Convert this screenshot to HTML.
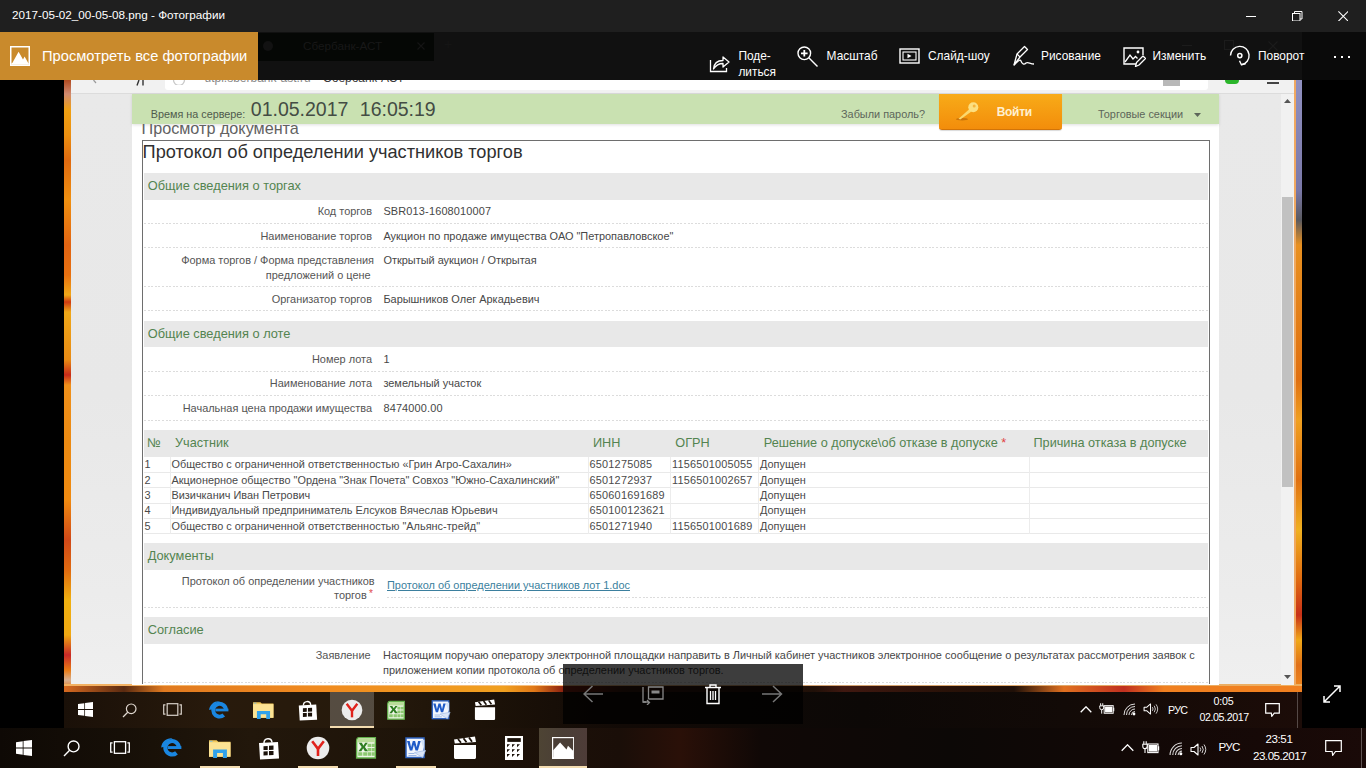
<!DOCTYPE html>
<html><head><meta charset="utf-8"><title>Фотографии</title>
<style>
*{margin:0;padding:0;box-sizing:border-box}
html,body{width:1366px;height:768px;overflow:hidden;background:#000}
body{position:relative;font-family:"Liberation Sans",sans-serif}
.a{position:absolute}
.t{position:absolute;white-space:nowrap}
</style></head><body>

<div class="a" style="left:71px;top:94px;width:1210px;height:591px;background:linear-gradient(180deg,#e9e9e9 0px,#e8e8e8 300px,#ececec 500px,#efefef 591px)"></div>
<div class="a" style="left:64px;top:80px;width:7px;height:612px;background:linear-gradient(180deg,#b04a20 0px,#d08a70 14px,#f0a012 30px,#ec9010 55px,#e06a10 80px,#f09010 120px,#e26412 165px,#e87010 195px,#f0a818 215px,#d03a12 222px,#f0a818 232px,#e88a14 280px,#c82a1a 295px,#f0901a 305px,#ec8a12 360px,#f08a10 420px,#d04818 460px,#e06a10 490px,#f0b010 520px,#f0a812 555px,#c82828 575px,#e87a14 590px,#d8b090 600px,#e09050 605px,#e08030 612px)"></div>
<div class="a" style="left:1294px;top:80px;width:2px;height:605px;background:#f0a860"></div>
<div class="a" style="left:1296px;top:80px;width:6px;height:612px;background:linear-gradient(180deg,#9090c0 0px,#7a78a8 110px,#5a5a60 140px,#e89020 165px,#e07010 300px,#f0a020 340px,#e07010 400px,#f0b020 450px,#e06a10 500px,#c83018 535px,#f0a818 560px,#e07018 585px,#f08a20 612px)"></div>
<div class="a" style="left:64px;top:684px;width:1238px;height:1.5px;background:linear-gradient(90deg,#f2b060,#f5c080 40%,#d0a070 60%,#f0b060)"></div>
<div class="a" style="left:64px;top:685.5px;width:1238px;height:6.5px;background:linear-gradient(90deg,#d86a20 0px,#5a2a10 60px,#e07a20 100px,#f08a20 250px,#f0a020 440px,#e07818 470px,#8a2010 500px,#3a1a10 560px,#201008 750px,#401810 780px,#2a1208 880px,#201008 950px,#e07020 1000px,#c03020 1060px,#f08020 1100px,#f08020 1238px)"></div>
<div class="a" style="left:71px;top:80px;width:1223px;height:14px;background:#f1f1f1;border-bottom:1px solid #dcdcdc"></div>
<div class="a" style="left:165px;top:80px;width:1043px;height:10px;background:#fff;border-radius:0 0 3px 3px"></div>
<div class="a" style="left:160px;top:80px;width:300px;height:12px;overflow:hidden"><div class="t" style="left:44.5px;top:-8.6px;font-size:12px;line-height:14px;color:#8a8a8a">utpi.sberbank-ast.ru</div><div class="t" style="left:163px;top:-8.6px;font-size:12px;line-height:14px;color:#3a3a3a">Сбербанк-АСТ</div></div>
<svg class="a" style="left:90px;top:80px;" width="60" height="6" viewBox="0 0 60 6"><path d="M3.5 0L6 3" stroke="#999" stroke-width="1.2"/><path d="M49 0L47 5.5M53 0V5.5" stroke="#333" stroke-width="1.4"/></svg>
<svg class="a" style="left:172px;top:80px;" width="14" height="5" viewBox="0 0 14 5"><path d="M1.5 0A5.5 5.5 0 0 0 12.5 0" fill="none" stroke="#c8c8c8" stroke-width="1.3"/></svg>
<div class="a" style="left:1163px;top:80px;width:17px;height:6px;background:#b8b8b8"></div>
<div class="a" style="left:1225px;top:80px;width:14px;height:4px;background:#2ab52a;border-radius:0 0 7px 7px"></div>
<div class="a" style="left:1267px;top:82px;width:12px;height:2px;background:#444"></div>
<div class="a" style="left:132px;top:124px;width:1087px;height:561px;background:#fff"></div>
<div class="a" style="left:132px;top:94px;width:1087px;height:30px;background:#c9e1b1;box-shadow:0 1px 3px rgba(0,0,0,.13)"></div>
<div class="a" style="left:1281px;top:94px;width:13px;height:591px;background:#f1f1f1"></div>
<div class="a" style="left:1282px;top:197px;width:11px;height:290px;background:#c1c1c1"></div>
<svg class="a" style="left:1284px;top:99px;" width="7" height="4" viewBox="0 0 7 4"><path d="M0 4H7L3.5 0Z" fill="#555"/></svg>
<svg class="a" style="left:1284px;top:675px;" width="7" height="4" viewBox="0 0 7 4"><path d="M0 0H7L3.5 4Z" fill="#555"/></svg>
<div class="t" style="left:150.80px;top:108.79px;font-size:10.8px;line-height:10.8px;color:#4f5a4c;font-weight:400;font-family:'Liberation Sans',sans-serif;">Время на сервере:</div>
<div class="t" style="left:250.80px;top:100.36px;font-size:19.5px;line-height:19.5px;color:#444c44;font-weight:400;font-family:'Liberation Sans',sans-serif;">01.05.2017</div>
<div class="t" style="left:359.80px;top:100.36px;font-size:19.5px;line-height:19.5px;color:#444c44;font-weight:400;font-family:'Liberation Sans',sans-serif;">16:05:19</div>
<div class="t" style="left:841.00px;top:108.58px;font-size:10.9px;line-height:10.9px;color:#5d665a;font-weight:400;font-family:'Liberation Sans',sans-serif;">Забыли пароль?</div>
<div class="t" style="left:1098.00px;top:108.58px;font-size:10.9px;line-height:10.9px;color:#5d665a;font-weight:400;font-family:'Liberation Sans',sans-serif;">Торговые секции</div>
<svg class="a" style="left:1194px;top:113px;" width="7" height="4" viewBox="0 0 7 4"><path d="M0 0H7L3.5 4Z" fill="#5d665a"/></svg>
<div class="a" style="left:939px;top:94px;width:123px;height:36px;background:linear-gradient(180deg,#f8ab18,#f38d0b);border-bottom:1px solid #d27408;border-radius:0 0 3px 3px;box-shadow:0 1px 1px rgba(0,0,0,.15)"></div>
<div class="t" style="left:996.70px;top:105.73px;font-size:12px;line-height:12px;color:#fff0d0;font-weight:700;font-family:'Liberation Sans',sans-serif;letter-spacing:-0.3px">Войти</div>
<svg class="a" style="left:954px;top:101px;" width="26" height="20" viewBox="0 0 26 20"><ellipse cx="8" cy="18.2" rx="6" ry="1.2" fill="#a85a08" opacity=".55"/><path d="M15.5 8 L4.5 17.8 L6.3 18.6 L17.8 10.3Z" fill="#fbd86e"/><circle cx="19.3" cy="6.2" r="5" fill="#fcdf80"/><circle cx="20.2" cy="5" r="1.5" fill="#f6b43a"/></svg>
<div class="a" style="left:132px;top:124px;width:400px;height:16px;overflow:hidden"><div class="t" style="left:9.5px;top:-6.21px;font-size:16.2px;line-height:20px;color:#626262">Просмотр документа</div></div>
<div class="a" style="left:142px;top:140px;width:1068px;height:544px;border:1.5px solid #6e6e6e;border-bottom:none"></div>
<div class="t" style="left:142.60px;top:143.12px;font-size:18.2px;line-height:18.2px;color:#303030;font-weight:400;font-family:'Liberation Sans',sans-serif;">Протокол об определении участников торгов</div>
<div class="a" style="left:143.5px;top:173px;width:1064.5px;height:27px;background:#e8e8e8"></div>
<div class="t" style="left:147.70px;top:180.33px;font-size:12.8px;line-height:12.8px;color:#538450;font-weight:400;font-family:'Liberation Sans',sans-serif;">Общие сведения о торгах</div>
<div class="t" style="right:994.00px;text-align:right;top:205.87px;font-size:10.95px;line-height:10.95px;color:#555;font-weight:400;font-family:'Liberation Sans',sans-serif;">Код торгов</div>
<div class="t" style="left:383.40px;top:205.87px;font-size:10.95px;line-height:10.95px;color:#474747;font-weight:400;font-family:'Liberation Sans',sans-serif;letter-spacing:0.16px">SBR013-1608010007</div>
<div class="a" style="left:143.5px;top:223px;width:1064.5px;height:1px;background:repeating-linear-gradient(90deg,#dcdcdc 0 2px,transparent 2px 3.6px)"></div>
<div class="t" style="right:994.00px;text-align:right;top:230.57px;font-size:10.95px;line-height:10.95px;color:#555;font-weight:400;font-family:'Liberation Sans',sans-serif;">Наименование торгов</div>
<div class="t" style="left:383.40px;top:230.57px;font-size:10.95px;line-height:10.95px;color:#474747;font-weight:400;font-family:'Liberation Sans',sans-serif;">Аукцион по продаже имущества ОАО "Петропавловское"</div>
<div class="a" style="left:143.5px;top:247px;width:1064.5px;height:1px;background:repeating-linear-gradient(90deg,#dcdcdc 0 2px,transparent 2px 3.6px)"></div>
<div class="t" style="right:992.00px;text-align:right;top:255.37px;font-size:10.95px;line-height:10.95px;color:#555;font-weight:400;font-family:'Liberation Sans',sans-serif;">Форма торгов / Форма представления</div>
<div class="t" style="right:995.30px;text-align:right;top:269.67px;font-size:10.95px;line-height:10.95px;color:#555;font-weight:400;font-family:'Liberation Sans',sans-serif;">предложений о цене</div>
<div class="t" style="left:383.40px;top:255.37px;font-size:10.95px;line-height:10.95px;color:#474747;font-weight:400;font-family:'Liberation Sans',sans-serif;">Открытый аукцион / Открытая</div>
<div class="a" style="left:143.5px;top:286px;width:1064.5px;height:1px;background:repeating-linear-gradient(90deg,#dcdcdc 0 2px,transparent 2px 3.6px)"></div>
<div class="t" style="right:994.00px;text-align:right;top:294.17px;font-size:10.95px;line-height:10.95px;color:#555;font-weight:400;font-family:'Liberation Sans',sans-serif;">Организатор торгов</div>
<div class="t" style="left:383.40px;top:294.17px;font-size:10.95px;line-height:10.95px;color:#474747;font-weight:400;font-family:'Liberation Sans',sans-serif;">Барышников Олег Аркадьевич</div>
<div class="a" style="left:143.5px;top:310px;width:1064.5px;height:1px;background:repeating-linear-gradient(90deg,#dcdcdc 0 2px,transparent 2px 3.6px)"></div>
<div class="a" style="left:143.5px;top:321px;width:1064.5px;height:26px;background:#e8e8e8"></div>
<div class="t" style="left:147.70px;top:328.33px;font-size:12.8px;line-height:12.8px;color:#538450;font-weight:400;font-family:'Liberation Sans',sans-serif;">Общие сведения о лоте</div>
<div class="t" style="right:994.00px;text-align:right;top:353.57px;font-size:10.95px;line-height:10.95px;color:#555;font-weight:400;font-family:'Liberation Sans',sans-serif;">Номер лота</div>
<div class="t" style="left:383.40px;top:353.57px;font-size:10.95px;line-height:10.95px;color:#474747;font-weight:400;font-family:'Liberation Sans',sans-serif;letter-spacing:0.16px">1</div>
<div class="a" style="left:143.5px;top:371px;width:1064.5px;height:1px;background:repeating-linear-gradient(90deg,#dcdcdc 0 2px,transparent 2px 3.6px)"></div>
<div class="t" style="right:994.00px;text-align:right;top:378.27px;font-size:10.95px;line-height:10.95px;color:#555;font-weight:400;font-family:'Liberation Sans',sans-serif;">Наименование лота</div>
<div class="t" style="left:383.40px;top:378.27px;font-size:10.95px;line-height:10.95px;color:#474747;font-weight:400;font-family:'Liberation Sans',sans-serif;">земельный участок</div>
<div class="a" style="left:143.5px;top:395px;width:1064.5px;height:1px;background:repeating-linear-gradient(90deg,#dcdcdc 0 2px,transparent 2px 3.6px)"></div>
<div class="t" style="right:994.00px;text-align:right;top:402.57px;font-size:10.95px;line-height:10.95px;color:#555;font-weight:400;font-family:'Liberation Sans',sans-serif;">Начальная цена продажи имущества</div>
<div class="t" style="left:383.40px;top:402.57px;font-size:10.95px;line-height:10.95px;color:#474747;font-weight:400;font-family:'Liberation Sans',sans-serif;letter-spacing:0.16px">8474000.00</div>
<div class="a" style="left:143.5px;top:420px;width:1064.5px;height:1px;background:repeating-linear-gradient(90deg,#dcdcdc 0 2px,transparent 2px 3.6px)"></div>
<div class="a" style="left:143.5px;top:430px;width:1064.5px;height:26.600000000000023px;background:#e8e8e8"></div>
<div class="t" style="left:147.00px;top:436.94px;font-size:12.7px;line-height:12.7px;color:#538450;font-weight:400;font-family:'Liberation Sans',sans-serif;">№</div>
<div class="t" style="left:175.00px;top:436.94px;font-size:12.7px;line-height:12.7px;color:#538450;font-weight:400;font-family:'Liberation Sans',sans-serif;">Участник</div>
<div class="t" style="left:593.00px;top:436.94px;font-size:12.7px;line-height:12.7px;color:#538450;font-weight:400;font-family:'Liberation Sans',sans-serif;">ИНН</div>
<div class="t" style="left:675.30px;top:436.94px;font-size:12.7px;line-height:12.7px;color:#538450;font-weight:400;font-family:'Liberation Sans',sans-serif;">ОГРН</div>
<div class="t" style="left:763.80px;top:436.94px;font-size:12.7px;line-height:12.7px;color:#538450;font-weight:400;font-family:'Liberation Sans',sans-serif;">Решение о допуске\об отказе в допуске <span style="color:#e04040">*</span></div>
<div class="t" style="left:1033.50px;top:436.94px;font-size:12.7px;line-height:12.7px;color:#538450;font-weight:400;font-family:'Liberation Sans',sans-serif;">Причина отказа в допуске</div>
<div class="t" style="left:144.50px;top:458.98px;font-size:10.9px;line-height:10.9px;color:#4a4a4a;font-weight:400;font-family:'Liberation Sans',sans-serif;">1</div>
<div class="t" style="left:171.50px;top:458.98px;font-size:10.9px;line-height:10.9px;color:#4a4a4a;font-weight:400;font-family:'Liberation Sans',sans-serif;">Общество с ограниченной ответственностью «Грин Агро-Сахалин»</div>
<div class="t" style="left:589.60px;top:458.98px;font-size:10.9px;line-height:10.9px;color:#4a4a4a;font-weight:400;font-family:'Liberation Sans',sans-serif;letter-spacing:0.2px">6501275085</div>
<div class="t" style="left:672.00px;top:458.98px;font-size:10.9px;line-height:10.9px;color:#4a4a4a;font-weight:400;font-family:'Liberation Sans',sans-serif;letter-spacing:0.2px">1156501005055</div>
<div class="t" style="left:760.00px;top:458.98px;font-size:10.9px;line-height:10.9px;color:#4a4a4a;font-weight:400;font-family:'Liberation Sans',sans-serif;">Допущен</div>
<div class="a" style="left:143.5px;top:471.7px;width:1064.5px;height:1.0px;background:#e9e9e9"></div>
<div class="t" style="left:144.50px;top:474.58px;font-size:10.9px;line-height:10.9px;color:#4a4a4a;font-weight:400;font-family:'Liberation Sans',sans-serif;">2</div>
<div class="t" style="left:171.50px;top:474.58px;font-size:10.9px;line-height:10.9px;color:#4a4a4a;font-weight:400;font-family:'Liberation Sans',sans-serif;">Акционерное общество "Ордена "Знак Почета" Совхоз "Южно-Сахалинский"</div>
<div class="t" style="left:589.60px;top:474.58px;font-size:10.9px;line-height:10.9px;color:#4a4a4a;font-weight:400;font-family:'Liberation Sans',sans-serif;letter-spacing:0.2px">6501272937</div>
<div class="t" style="left:672.00px;top:474.58px;font-size:10.9px;line-height:10.9px;color:#4a4a4a;font-weight:400;font-family:'Liberation Sans',sans-serif;letter-spacing:0.2px">1156501002657</div>
<div class="t" style="left:760.00px;top:474.58px;font-size:10.9px;line-height:10.9px;color:#4a4a4a;font-weight:400;font-family:'Liberation Sans',sans-serif;">Допущен</div>
<div class="a" style="left:143.5px;top:487.1px;width:1064.5px;height:1.0px;background:#e9e9e9"></div>
<div class="t" style="left:144.50px;top:489.98px;font-size:10.9px;line-height:10.9px;color:#4a4a4a;font-weight:400;font-family:'Liberation Sans',sans-serif;">3</div>
<div class="t" style="left:171.50px;top:489.98px;font-size:10.9px;line-height:10.9px;color:#4a4a4a;font-weight:400;font-family:'Liberation Sans',sans-serif;">Визичканич Иван Петрович</div>
<div class="t" style="left:589.60px;top:489.98px;font-size:10.9px;line-height:10.9px;color:#4a4a4a;font-weight:400;font-family:'Liberation Sans',sans-serif;letter-spacing:0.2px">650601691689</div>
<div class="t" style="left:672.00px;top:489.98px;font-size:10.9px;line-height:10.9px;color:#4a4a4a;font-weight:400;font-family:'Liberation Sans',sans-serif;letter-spacing:0.2px"></div>
<div class="t" style="left:760.00px;top:489.98px;font-size:10.9px;line-height:10.9px;color:#4a4a4a;font-weight:400;font-family:'Liberation Sans',sans-serif;">Допущен</div>
<div class="a" style="left:143.5px;top:502.5px;width:1064.5px;height:1.0px;background:#e9e9e9"></div>
<div class="t" style="left:144.50px;top:505.38px;font-size:10.9px;line-height:10.9px;color:#4a4a4a;font-weight:400;font-family:'Liberation Sans',sans-serif;">4</div>
<div class="t" style="left:171.50px;top:505.38px;font-size:10.9px;line-height:10.9px;color:#4a4a4a;font-weight:400;font-family:'Liberation Sans',sans-serif;">Индивидуальный предприниматель Елсуков Вячеслав Юрьевич</div>
<div class="t" style="left:589.60px;top:505.38px;font-size:10.9px;line-height:10.9px;color:#4a4a4a;font-weight:400;font-family:'Liberation Sans',sans-serif;letter-spacing:0.2px">650100123621</div>
<div class="t" style="left:672.00px;top:505.38px;font-size:10.9px;line-height:10.9px;color:#4a4a4a;font-weight:400;font-family:'Liberation Sans',sans-serif;letter-spacing:0.2px"></div>
<div class="t" style="left:760.00px;top:505.38px;font-size:10.9px;line-height:10.9px;color:#4a4a4a;font-weight:400;font-family:'Liberation Sans',sans-serif;">Допущен</div>
<div class="a" style="left:143.5px;top:517.8px;width:1064.5px;height:1.0px;background:#e9e9e9"></div>
<div class="t" style="left:144.50px;top:520.68px;font-size:10.9px;line-height:10.9px;color:#4a4a4a;font-weight:400;font-family:'Liberation Sans',sans-serif;">5</div>
<div class="t" style="left:171.50px;top:520.68px;font-size:10.9px;line-height:10.9px;color:#4a4a4a;font-weight:400;font-family:'Liberation Sans',sans-serif;">Общество с ограниченной ответственностью "Альянс-трейд"</div>
<div class="t" style="left:589.60px;top:520.68px;font-size:10.9px;line-height:10.9px;color:#4a4a4a;font-weight:400;font-family:'Liberation Sans',sans-serif;letter-spacing:0.2px">6501271940</div>
<div class="t" style="left:672.00px;top:520.68px;font-size:10.9px;line-height:10.9px;color:#4a4a4a;font-weight:400;font-family:'Liberation Sans',sans-serif;letter-spacing:0.2px">1156501001689</div>
<div class="t" style="left:760.00px;top:520.68px;font-size:10.9px;line-height:10.9px;color:#4a4a4a;font-weight:400;font-family:'Liberation Sans',sans-serif;">Допущен</div>
<div class="a" style="left:143.5px;top:533.2px;width:1064.5px;height:1.0px;background:#e9e9e9"></div>
<div class="a" style="left:170.0px;top:456.6px;width:1.0px;height:77.10000000000002px;background:#ececec"></div>
<div class="a" style="left:587.5px;top:456.6px;width:1.0px;height:77.10000000000002px;background:#ececec"></div>
<div class="a" style="left:670.3px;top:456.6px;width:1.0px;height:77.10000000000002px;background:#ececec"></div>
<div class="a" style="left:758.3px;top:456.6px;width:1.0px;height:77.10000000000002px;background:#ececec"></div>
<div class="a" style="left:1028.7px;top:456.6px;width:1.0px;height:77.10000000000002px;background:#ececec"></div>
<div class="a" style="left:143.5px;top:543px;width:1064.5px;height:26.5px;background:#e8e8e8"></div>
<div class="t" style="left:147.70px;top:550.33px;font-size:12.8px;line-height:12.8px;color:#538450;font-weight:400;font-family:'Liberation Sans',sans-serif;">Документы</div>
<div class="t" style="right:991.40px;text-align:right;top:575.77px;font-size:10.95px;line-height:10.95px;color:#555;font-weight:400;font-family:'Liberation Sans',sans-serif;">Протокол об определении участников</div>
<div class="t" style="right:999.30px;text-align:right;top:590.07px;font-size:10.95px;line-height:10.95px;color:#555;font-weight:400;font-family:'Liberation Sans',sans-serif;">торгов</div>
<div class="t" style="left:369.00px;top:589.19px;font-size:10px;line-height:10px;color:#e04848;font-weight:400;font-family:'Liberation Sans',sans-serif;">*</div>
<div class="t" style="left:387.00px;top:580.17px;font-size:10.95px;line-height:10.95px;color:#3b7f9e;font-weight:400;font-family:'Liberation Sans',sans-serif;text-decoration:underline">Протокол об определении участников лот 1.doc</div>
<div class="a" style="left:387px;top:597px;width:821px;height:1px;background:repeating-linear-gradient(90deg,#dcdcdc 0 2px,transparent 2px 3.6px)"></div>
<div class="a" style="left:143.5px;top:607px;width:1064.5px;height:1px;background:repeating-linear-gradient(90deg,#dcdcdc 0 2px,transparent 2px 3.6px)"></div>
<div class="a" style="left:143.5px;top:617.4px;width:1064.5px;height:26.399999999999977px;background:#e8e8e8"></div>
<div class="t" style="left:147.70px;top:624.33px;font-size:12.8px;line-height:12.8px;color:#538450;font-weight:400;font-family:'Liberation Sans',sans-serif;">Согласие</div>
<div class="t" style="right:995.40px;text-align:right;top:649.77px;font-size:10.95px;line-height:10.95px;color:#555;font-weight:400;font-family:'Liberation Sans',sans-serif;">Заявление</div>
<div class="t" style="left:383.00px;top:649.77px;font-size:10.95px;line-height:10.95px;color:#474747;font-weight:400;font-family:'Liberation Sans',sans-serif;">Настоящим поручаю оператору электронной площадки направить в Личный кабинет участников электронное сообщение о результатах рассмотрения заявок с</div>
<div class="t" style="left:383.00px;top:664.57px;font-size:10.95px;line-height:10.95px;color:#474747;font-weight:400;font-family:'Liberation Sans',sans-serif;">приложением копии протокола об определении участников торгов.</div>
<div class="a" style="left:143.5px;top:681.5px;width:1064.5px;height:1.0px;background:repeating-linear-gradient(90deg,#dcdcdc 0 2px,transparent 2px 3.6px)"></div>
<div class="a" style="left:0px;top:0px;width:1366px;height:32px;background:#1f1f1f"></div>
<div class="a" style="left:0px;top:32px;width:1366px;height:48px;background:#0a0a0a"></div>
<div class="a" style="left:64px;top:32px;width:1238px;height:48px;background:#111"></div>
<div class="a" style="left:0px;top:32px;width:258px;height:48px;background:#c98a2c"></div>
<div class="a" style="left:258px;top:33px;width:176px;height:28px;background:#050705"></div>
<div class="t" style="left:303.00px;top:39.97px;font-size:11.7px;line-height:11.7px;color:#181818;font-weight:400;font-family:'Liberation Sans',sans-serif;">Сбербанк-АСТ</div>
<div class="a" style="left:263px;top:41px;width:10px;height:10px;border-radius:50%;background:#121212"></div>
<svg class="a" style="left:417px;top:42px;" width="8" height="8" viewBox="0 0 8 8"><path d="M0.5 0.5L7.5 7.5M7.5 0.5L0.5 7.5" stroke="#151515" stroke-width="1.1"/></svg>
<div class="t" style="left:444.00px;top:37.17px;font-size:14px;line-height:14px;color:#151515;font-weight:400;font-family:'Liberation Sans',sans-serif;">+</div>
<svg class="a" style="left:1268px;top:41px;" width="10" height="10" viewBox="0 0 10 10"><path d="M0.5 0.5L9.5 9.5M9.5 0.5L0.5 9.5" stroke="#1c1c1c" stroke-width="1.1"/></svg>
<div class="a" style="left:1182px;top:45px;width:10px;height:1px;background:#1c1c1c"></div>
<div class="a" style="left:1224px;top:40px;width:10px;height:10px;border:1px solid #1c1c1c"></div>
<div class="t" style="left:12.00px;top:9.47px;font-size:11.7px;line-height:11.7px;color:#fff;font-weight:400;font-family:'Liberation Sans',sans-serif;">2017-05-02_00-05-08.png - Фотографии</div>
<div class="a" style="left:1246px;top:15.6px;width:10.200000000000045px;height:1.0000000000000018px;background:#fff"></div>
<svg class="a" style="left:1292px;top:10.8px;" width="10.5" height="10.5" viewBox="0 0 10.5 10.5"><rect x="0.5" y="2.5" width="7.5" height="7.5" fill="none" stroke="#fff" stroke-width="1"/><path d="M2.5 2.5V0.5H10V8H8" fill="none" stroke="#fff" stroke-width="1"/></svg>
<svg class="a" style="left:1337.8px;top:10.8px;" width="10.6" height="10.6" viewBox="0 0 10.6 10.6"><path d="M0.4 0.4L10.2 10.2M10.2 0.4L0.4 10.2" stroke="#fff" stroke-width="1.05"/></svg>
<svg class="a" style="left:10px;top:46px;" width="20" height="20" viewBox="0 0 20 20"><rect x="0" y="0" width="20" height="20" fill="#fff"/><rect x="1.5" y="1.5" width="17" height="17" fill="#c98a2c"/><path d="M1.5 18.5 L8.6 5.8 L13 13.5 L14.6 10.5 L18.5 17.5 V18.5Z" fill="#fff"/><path d="M1.5 18.5H18.5V17H1.5Z" fill="#fff"/></svg>
<div class="t" style="left:42.00px;top:49.28px;font-size:14.7px;line-height:14.7px;color:#fff;font-weight:400;font-family:'Liberation Sans',sans-serif;">Просмотреть все фотографии</div>
<svg class="a" style="left:709px;top:53px;" width="22" height="20" viewBox="0 0 22 20"><path d="M1.5 7V18.5H17.5V15" fill="none" stroke="#fff" stroke-width="1.3"/><path d="M4.5 16 C5 10 9 7.5 14 7.5 V4 L20 9 L14 14 V10.5 C10 10.5 7 12 4.5 16Z" fill="none" stroke="#fff" stroke-width="1.3" stroke-linejoin="round"/></svg>
<div class="t" style="left:738.40px;top:51.15px;font-size:11.9px;line-height:11.9px;color:#fff;font-weight:400;font-family:'Liberation Sans',sans-serif;">Поде-</div>
<div class="t" style="left:738.40px;top:66.95px;font-size:11.9px;line-height:11.9px;color:#fff;font-weight:400;font-family:'Liberation Sans',sans-serif;">литься</div>
<svg class="a" style="left:797px;top:46px;" width="22" height="21" viewBox="0 0 22 21"><circle cx="7.3" cy="7.3" r="6.3" fill="none" stroke="#fff" stroke-width="1.4"/><path d="M4 7.3H10.6M7.3 4V10.6" stroke="#fff" stroke-width="1.8"/><path d="M11.8 11.8L20.5 20.5" stroke="#fff" stroke-width="1.4"/></svg>
<div class="t" style="left:826.60px;top:50.95px;font-size:11.9px;line-height:11.9px;color:#fff;font-weight:400;font-family:'Liberation Sans',sans-serif;">Масштаб</div>
<svg class="a" style="left:899px;top:47px;" width="22" height="18" viewBox="0 0 22 18"><rect x="1" y="2" width="19" height="14" fill="none" stroke="#fff" stroke-width="1.4"/><rect x="4" y="5" width="13" height="8" fill="none" stroke="#fff" stroke-width="1.1"/><path d="M8.5 6.8V11.2L12.5 9Z" fill="#fff"/></svg>
<div class="t" style="left:928.00px;top:50.95px;font-size:11.9px;line-height:11.9px;color:#fff;font-weight:400;font-family:'Liberation Sans',sans-serif;">Слайд-шоу</div>
<svg class="a" style="left:1012px;top:45px;" width="23" height="23" viewBox="0 0 23 23"><path d="M2 20 L5 9 L12.5 1.5 L15.5 4.5 L8 12 Z" fill="none" stroke="#fff" stroke-width="1.3" stroke-linejoin="round"/><path d="M5 9L8 12" stroke="#fff" stroke-width="1.1"/><path d="M2 20 C6 16 8 14 9 16 C10 19 12 20 14 18 C16 16.5 18 19 22 19" fill="none" stroke="#fff" stroke-width="1.3"/></svg>
<div class="t" style="left:1041.00px;top:50.95px;font-size:11.9px;line-height:11.9px;color:#fff;font-weight:400;font-family:'Liberation Sans',sans-serif;">Рисование</div>
<svg class="a" style="left:1123px;top:47px;" width="23" height="20" viewBox="0 0 23 20"><path d="M13 17H1V1H20V8" fill="none" stroke="#fff" stroke-width="1.4"/><path d="M2 15 L7 8 L10 12 L12.5 9.5 L14.5 11.5" fill="none" stroke="#fff" stroke-width="1.3"/><circle cx="15" cy="5" r="1.4" fill="#fff"/><path d="M12.5 19.5 L13.5 15.5 L20 9 L22.5 11.5 L16 18 Z" fill="none" stroke="#fff" stroke-width="1.3" stroke-linejoin="round"/></svg>
<div class="t" style="left:1152.50px;top:50.95px;font-size:11.9px;line-height:11.9px;color:#fff;font-weight:400;font-family:'Liberation Sans',sans-serif;">Изменить</div>
<svg class="a" style="left:1228px;top:44px;" width="24" height="24" viewBox="0 0 24 24"><path d="M2.5 11.6 A9.3 9.3 0 1 1 13.4 20.8" fill="none" stroke="#fff" stroke-width="1.4"/><path d="M11.5 16.8 L13.4 20.8 L17.6 19.8" fill="none" stroke="#fff" stroke-width="1.4"/><circle cx="11.8" cy="11.6" r="2.1" fill="none" stroke="#fff" stroke-width="1.5"/></svg>
<div class="t" style="left:1258.00px;top:50.95px;font-size:11.9px;line-height:11.9px;color:#fff;font-weight:400;font-family:'Liberation Sans',sans-serif;">Поворот</div>
<div class="a" style="left:1334.2px;top:56.2px;width:2.0px;height:2.0px;background:#fff"></div>
<div class="a" style="left:1341.2px;top:56.2px;width:2.0px;height:2.0px;background:#fff"></div>
<div class="a" style="left:1348.2px;top:56.2px;width:2.0px;height:2.0px;background:#fff"></div>
<div class="a" style="left:64px;top:692px;width:1238px;height:36px;background:linear-gradient(90deg,#1a1008 0px,#281a0c 150px,#261a0c 300px,#1c1208 420px,#120a06 560px,#0c0806 800px,#120a07 1000px,#1c0c08 1238px)"></div>
<div class="a" style="left:0px;top:728px;width:1366px;height:40px;background:linear-gradient(90deg,#0e0905 0px,#160f07 120px,#22170b 250px,#1e1409 420px,#1a0e08 620px,#2a1008 680px,#100806 760px,#0c0806 950px,#120806 1150px,#1a0a08 1366px)"></div>
<svg class="a" style="left:78px;top:702px;" width="15" height="15" viewBox="0 0 15 15"><path d="M0 2.10L6.30 1.20V7.05H0Z M7.05 1.05L15 0V7.05H7.05Z M0 7.95H6.30V13.80L0 12.90Z M7.05 7.95H15V15L7.05 13.95Z" fill="#fff"/></svg>
<svg class="a" style="left:122px;top:703px;" width="15" height="15" viewBox="0 0 15 15"><circle cx="9.20" cy="5.80" r="4.80" fill="none" stroke="#e0d8d0" stroke-width="1.2"/><path d="M5.74 9.26L1 14" stroke="#e0d8d0" stroke-width="1.2"/></svg>
<svg class="a" style="left:163px;top:703px;" width="19" height="13" viewBox="0 0 19 13"><rect x="4.18" y="0.7" width="10.64" height="11.60" fill="none" stroke="#d8d0c8" stroke-width="1.2"/><path d="M2.47 1.95H0.7V11.05H2.47M16.53 1.95H18.30V11.05H16.53" fill="none" stroke="#d8d0c8" stroke-width="1.2"/></svg>
<svg class="a" style="left:208px;top:698px;" width="22" height="22" viewBox="0 0 24 24"><path d="M19.6 13.2 A7 7 0 1 0 17.2 18.6" fill="none" stroke="#1a86e0" stroke-width="4.3"/><path d="M8 11.6H22.3V14.6H8Z" fill="#1a86e0"/><path d="M1.2 13 C2 6.5 7.5 2.6 13.2 3.6 C8.5 4.6 5.2 8 4.6 12.2 Z" fill="#1a86e0"/></svg>
<svg class="a" style="left:253px;top:701.5px;" width="20.5" height="17" viewBox="0 0 21 17.5"><path d="M0 0.3H7.5L9 1.6H21V16.3H0Z" fill="#f2c85a"/><path d="M0 2.2H21V16.3H0Z" fill="#fce394"/><path d="M0.8 0.8H3.5V1.6H0.8Z" fill="#7cc4f0"/><path d="M4 9.3H17.5V17.5H13.6V12.7H7.9V17.5H4Z" fill="#30a2ec"/></svg>
<svg class="a" style="left:297px;top:699px;" width="21" height="22" viewBox="0 0 22 24"><path d="M6.5 7 C6.5 1.8 14 1.2 14.5 6.5" fill="none" stroke="#fff" stroke-width="1.5"/><path d="M1.5 7L20.5 6L21.5 22.5L2.5 23.5Z" fill="#fff"/><path d="M6 10.2L10.2 9.9V13.9L6 14.1Z M11.5 9.8L16 9.5V13.7L11.5 13.9Z M6 15.4L10.2 15.2V19.3L6 19.6Z M11.5 15.1L16 14.9V19L11.5 19.2Z" fill="#1b120a"/></svg>
<div class="a" style="left:330px;top:692px;width:44px;height:36px;background:rgba(255,255,255,.22)"></div>
<div class="a" style="left:330px;top:726px;width:44px;height:2px;background:#f3dcb0"></div>
<svg class="a" style="left:341px;top:699px;" width="22" height="22" viewBox="0 0 24 24"><circle cx="12" cy="12" r="11.3" fill="#ececec"/><path d="M6.2 5.2L12 12.8L17.8 5.2" fill="none" stroke="#e0221c" stroke-width="2.6"/><path d="M12 12V20" stroke="#e0221c" stroke-width="2.6"/></svg>
<svg class="a" style="left:385px;top:699px;" width="22" height="22" viewBox="0 0 23 24"><path d="M5 2.5H20.5V22H2.5V6Q2.5 2.5 5 2.5Z" fill="#eef6e6" stroke="#62b04a" stroke-width="1.4"/><path d="M3.2 6Q3.2 3.2 5.5 3.2H19.8V7H3.2Z" fill="#b8dc98"/><path d="M13 8.5H16.5V11.5H13ZM17 8.5H20V11.5H17ZM13 12.5H16.5V15.5H13ZM17 12.5H20V15.5H17ZM4 16.5H8V20H4ZM8.8 16.5H12.5V20H8.8ZM13 16.5H16.5V20H13ZM17 16.5H20V20H17Z" fill="#8cc870"/><path d="M4.5 7.5H7.5L9 10.2L10.7 7.5H13.2L10.4 11.5L13.4 15.5H10.4L8.8 12.8L7 15.5H4.2L7.4 11.5Z" fill="#2e7d22"/></svg>
<svg class="a" style="left:430px;top:699px;" width="21" height="22" viewBox="0 0 23 24"><rect x="2.5" y="2" width="18" height="19.5" fill="#f2f6fd" stroke="#2f63c0" stroke-width="1.5"/><path d="M3.5 5H6.2L7.6 11.2L9.3 5H11.6L13.2 11.2L14.6 5H17.2L14.4 14.5H12L10.4 8.8L8.8 14.5H6.4Z" fill="#1f5bc8"/><path d="M17.5 4.5L21 3.5V16Z" fill="#cfe0f8"/><path d="M11 16.5L22 14.5L19 21.5Z" fill="#dbe6f8" stroke="#a8c0e8" stroke-width=".8"/><path d="M5 17.5H11M5 19.5H13" stroke="#9bb6e4" stroke-width="1"/></svg>
<svg class="a" style="left:474px;top:699px;" width="22" height="22" viewBox="0 0 24 24"><path d="M1 9H23V21.5C23 22.3 22.3 23 21.5 23H2.5C1.7 23 1 22.3 1 21.5Z" fill="#fff"/><path d="M1 3.5L22 0.5L23 6L1.8 7.5Z" fill="#fff"/><path d="M5 3L8 6.8M10.5 2.2L13.5 6.3M16 1.5L19 5.8" stroke="#1b120a" stroke-width="1.8"/></svg>
<svg class="a" style="left:1080px;top:706px;" width="12" height="7" viewBox="0 0 12 7"><path d="M0.7 6.3L6.0 0.8L11.3 6.3" fill="none" stroke="#fff" stroke-width="1.3"/></svg>
<svg class="a" style="left:1099px;top:703px;" width="16" height="11.5" viewBox="0 0 18 13"><path d="M1.8 0.3V3M4.2 0.3V3" stroke="#fff" stroke-width="1.1"/><path d="M0.8 3.2H5.2V5.3Q5.2 7.6 3 7.6Q0.8 7.6 0.8 5.3Z" fill="none" stroke="#fff" stroke-width="1.1"/><path d="M3 7.6V12" stroke="#fff" stroke-width="1.1"/><rect x="5.8" y="3" width="10.2" height="8.6" fill="none" stroke="#fff" stroke-width="1.1"/><rect x="6.8" y="4" width="8.2" height="6.6" fill="#fff"/><rect x="16" y="5.3" width="1.2" height="4" fill="#fff"/></svg>
<svg class="a" style="left:1123px;top:703px;" width="13" height="13" viewBox="0 0 13 13"><path d="M1 12A11 11 0 0 1 12 1M3.5 12A8.5 8.5 0 0 1 12 3.5M6 12A6 6 0 0 1 12 6M8.5 12A3.5 3.5 0 0 1 12 8.5" fill="none" stroke="#fff" stroke-width="1" opacity=".85"/><circle cx="11" cy="11" r="1.4" fill="#fff"/></svg>
<svg class="a" style="left:1143px;top:703px;" width="16" height="12" viewBox="0 0 17 13"><path d="M1 4.5H4L8 1V12L4 8.5H1Z" fill="none" stroke="#fff" stroke-width="1.1" stroke-linejoin="round"/><path d="M10 4.5Q11.5 6.5 10 8.5M12 3Q14.5 6.5 12 10M14 1.5Q17.5 6.5 14 11.5" fill="none" stroke="#fff" stroke-width="1" opacity=".8"/></svg>
<div class="t" style="left:1168.00px;top:704.50px;font-size:10.7px;line-height:10.7px;color:#fff;font-weight:400;font-family:'Liberation Sans',sans-serif;letter-spacing:-0.7px">РУС</div>
<div class="t" style="left:1213.60px;top:696.30px;font-size:10.7px;line-height:10.7px;color:#fff;font-weight:400;font-family:'Liberation Sans',sans-serif;letter-spacing:-0.25px">0:05</div>
<div class="t" style="left:1199.40px;top:711.80px;font-size:10.7px;line-height:10.7px;color:#fff;font-weight:400;font-family:'Liberation Sans',sans-serif;letter-spacing:-0.41px">02.05.2017</div>
<svg class="a" style="left:1265px;top:703px;" width="15" height="14" viewBox="0 0 15 14"><path d="M0.7 0.7H14.3V10.1H9.3L6.8 13.3L6.3 10.1H0.7Z" fill="none" stroke="#fff" stroke-width="1.2"/></svg>
<div class="a" style="left:1297px;top:692px;width:1px;height:36px;background:rgba(255,255,255,.25)"></div>
<svg class="a" style="left:16px;top:740px;" width="16" height="16" viewBox="0 0 16 16"><path d="M0 2.24L6.72 1.28V7.52H0Z M7.52 1.12L16 0V7.52H7.52Z M0 8.48H6.72V14.72L0 13.76Z M7.52 8.48H16V16L7.52 14.88Z" fill="#fff"/></svg>
<svg class="a" style="left:63px;top:740px;" width="17" height="17" viewBox="0 0 17 17"><circle cx="10.56" cy="6.44" r="5.44" fill="none" stroke="#fff" stroke-width="1.4"/><path d="M6.64 10.36L1 16" stroke="#fff" stroke-width="1.4"/></svg>
<svg class="a" style="left:110px;top:741px;" width="20" height="13" viewBox="0 0 20 13"><rect x="4.40" y="0.7" width="11.20" height="11.60" fill="none" stroke="#fff" stroke-width="1.3"/><path d="M2.60 1.95H0.7V11.05H2.60M17.40 1.95H19.30V11.05H17.40" fill="none" stroke="#fff" stroke-width="1.3"/></svg>
<svg class="a" style="left:160px;top:735px;" width="23" height="23" viewBox="0 0 24 24"><path d="M19.6 13.2 A7 7 0 1 0 17.2 18.6" fill="none" stroke="#1a86e0" stroke-width="4.3"/><path d="M8 11.6H22.3V14.6H8Z" fill="#1a86e0"/><path d="M1.2 13 C2 6.5 7.5 2.6 13.2 3.6 C8.5 4.6 5.2 8 4.6 12.2 Z" fill="#1a86e0"/></svg>
<svg class="a" style="left:209px;top:739.6px;" width="21.5" height="18" viewBox="0 0 21 17.5"><path d="M0 0.3H7.5L9 1.6H21V16.3H0Z" fill="#f2c85a"/><path d="M0 2.2H21V16.3H0Z" fill="#fce394"/><path d="M0.8 0.8H3.5V1.6H0.8Z" fill="#7cc4f0"/><path d="M4 9.3H17.5V17.5H13.6V12.7H7.9V17.5H4Z" fill="#30a2ec"/></svg>
<div class="a" style="left:200px;top:766px;width:40px;height:2px;background:#f3dcb0"></div>
<svg class="a" style="left:257px;top:736px;" width="23" height="24" viewBox="0 0 22 24"><path d="M6.5 7 C6.5 1.8 14 1.2 14.5 6.5" fill="none" stroke="#fff" stroke-width="1.5"/><path d="M1.5 7L20.5 6L21.5 22.5L2.5 23.5Z" fill="#fff"/><path d="M6 10.2L10.2 9.9V13.9L6 14.1Z M11.5 9.8L16 9.5V13.7L11.5 13.9Z M6 15.4L10.2 15.2V19.3L6 19.6Z M11.5 15.1L16 14.9V19L11.5 19.2Z" fill="#1b120a"/></svg>
<svg class="a" style="left:306px;top:736px;" width="24" height="24" viewBox="0 0 24 24"><circle cx="12" cy="12" r="11.3" fill="#ececec"/><path d="M6.2 5.2L12 12.8L17.8 5.2" fill="none" stroke="#e0221c" stroke-width="2.6"/><path d="M12 12V20" stroke="#e0221c" stroke-width="2.6"/></svg>
<div class="a" style="left:298px;top:766px;width:40px;height:2px;background:#f3dcb0"></div>
<svg class="a" style="left:354px;top:735px;" width="24" height="25" viewBox="0 0 23 24"><path d="M5 2.5H20.5V22H2.5V6Q2.5 2.5 5 2.5Z" fill="#eef6e6" stroke="#62b04a" stroke-width="1.4"/><path d="M3.2 6Q3.2 3.2 5.5 3.2H19.8V7H3.2Z" fill="#b8dc98"/><path d="M13 8.5H16.5V11.5H13ZM17 8.5H20V11.5H17ZM13 12.5H16.5V15.5H13ZM17 12.5H20V15.5H17ZM4 16.5H8V20H4ZM8.8 16.5H12.5V20H8.8ZM13 16.5H16.5V20H13ZM17 16.5H20V20H17Z" fill="#8cc870"/><path d="M4.5 7.5H7.5L9 10.2L10.7 7.5H13.2L10.4 11.5L13.4 15.5H10.4L8.8 12.8L7 15.5H4.2L7.4 11.5Z" fill="#2e7d22"/></svg>
<svg class="a" style="left:403px;top:736px;" width="24" height="24" viewBox="0 0 23 24"><rect x="2.5" y="2" width="18" height="19.5" fill="#f2f6fd" stroke="#2f63c0" stroke-width="1.5"/><path d="M3.5 5H6.2L7.6 11.2L9.3 5H11.6L13.2 11.2L14.6 5H17.2L14.4 14.5H12L10.4 8.8L8.8 14.5H6.4Z" fill="#1f5bc8"/><path d="M17.5 4.5L21 3.5V16Z" fill="#cfe0f8"/><path d="M11 16.5L22 14.5L19 21.5Z" fill="#dbe6f8" stroke="#a8c0e8" stroke-width=".8"/><path d="M5 17.5H11M5 19.5H13" stroke="#9bb6e4" stroke-width="1"/></svg>
<div class="a" style="left:396px;top:766px;width:40px;height:2px;background:#f3dcb0"></div>
<svg class="a" style="left:453px;top:736px;" width="24" height="24" viewBox="0 0 24 24"><path d="M1 9H23V21.5C23 22.3 22.3 23 21.5 23H2.5C1.7 23 1 22.3 1 21.5Z" fill="#fff"/><path d="M1 3.5L22 0.5L23 6L1.8 7.5Z" fill="#fff"/><path d="M5 3L8 6.8M10.5 2.2L13.5 6.3M16 1.5L19 5.8" stroke="#1b120a" stroke-width="1.8"/></svg>
<svg class="a" style="left:505px;top:735.8px;" width="18" height="24.3" viewBox="0 0 18 24.3"><rect x="0" y="0" width="18" height="24.3" fill="#fff"/><rect x="2.3" y="2.1" width="13.5" height="3.8" fill="#1b120a"/><path d="M2.0 8.2H5.0L2.0 11.2Z" fill="#1b120a"/><path d="M7.0 8.2H10.0L7.0 11.2Z" fill="#1b120a"/><path d="M12.0 8.2H15.0L12.0 11.2Z" fill="#1b120a"/><path d="M2.0 13.2H5.0L2.0 16.2Z" fill="#1b120a"/><path d="M7.0 13.2H10.0L7.0 16.2Z" fill="#1b120a"/><path d="M12.0 13.2H15.0L12.0 16.2Z" fill="#1b120a"/><path d="M2.0 18.1H5.0L2.0 21.1Z" fill="#1b120a"/><path d="M7.0 18.1H10.0L7.0 21.1Z" fill="#1b120a"/><path d="M12.0 18.1H15.0L12.0 21.1Z" fill="#1b120a"/></svg>
<div class="a" style="left:539px;top:728px;width:48px;height:40px;background:linear-gradient(90deg,#4e4434,#4a3e36 50%,#4e3c38)"></div>
<div class="a" style="left:539px;top:766px;width:48px;height:2px;background:#f3dcb0"></div>
<svg class="a" style="left:551.8px;top:737px;" width="22.3" height="22" viewBox="0 0 22.3 22"><rect x="0" y="0" width="22.3" height="22" fill="#fff"/><rect x="1.2" y="1.2" width="19.9" height="19" fill="#4a3e36"/><path d="M1.2 13.2L8.1 5.5L14.5 12.6L16 8.8L21.1 13.7V22H1.2Z" fill="#fff"/></svg>
<svg class="a" style="left:1121px;top:744px;" width="13" height="7.5" viewBox="0 0 13 7.5"><path d="M0.7 6.8L6.5 0.8L12.3 6.8" fill="none" stroke="#fff" stroke-width="1.3"/></svg>
<svg class="a" style="left:1142px;top:741px;" width="18" height="13" viewBox="0 0 18 13"><path d="M1.8 0.3V3M4.2 0.3V3" stroke="#fff" stroke-width="1.1"/><path d="M0.8 3.2H5.2V5.3Q5.2 7.6 3 7.6Q0.8 7.6 0.8 5.3Z" fill="none" stroke="#fff" stroke-width="1.1"/><path d="M3 7.6V12" stroke="#fff" stroke-width="1.1"/><rect x="5.8" y="3" width="10.2" height="8.6" fill="none" stroke="#fff" stroke-width="1.1"/><rect x="6.8" y="4" width="8.2" height="6.6" fill="#fff"/><rect x="16" y="5.3" width="1.2" height="4" fill="#fff"/></svg>
<svg class="a" style="left:1169px;top:742px;" width="14" height="14" viewBox="0 0 13 13"><path d="M1 12A11 11 0 0 1 12 1M3.5 12A8.5 8.5 0 0 1 12 3.5M6 12A6 6 0 0 1 12 6M8.5 12A3.5 3.5 0 0 1 12 8.5" fill="none" stroke="#fff" stroke-width="1" opacity=".85"/><circle cx="11" cy="11" r="1.4" fill="#fff"/></svg>
<svg class="a" style="left:1190px;top:743px;" width="17" height="13" viewBox="0 0 17 13"><path d="M1 4.5H4L8 1V12L4 8.5H1Z" fill="none" stroke="#fff" stroke-width="1.1" stroke-linejoin="round"/><path d="M10 4.5Q11.5 6.5 10 8.5M12 3Q14.5 6.5 12 10M14 1.5Q17.5 6.5 14 11.5" fill="none" stroke="#fff" stroke-width="1" opacity=".8"/></svg>
<div class="t" style="left:1218.40px;top:741.49px;font-size:11.6px;line-height:11.6px;color:#fff;font-weight:400;font-family:'Liberation Sans',sans-serif;letter-spacing:-0.6px">РУС</div>
<div class="t" style="left:1265.50px;top:733.19px;font-size:11.6px;line-height:11.6px;color:#fff;font-weight:400;font-family:'Liberation Sans',sans-serif;letter-spacing:-0.42px">23:51</div>
<div class="t" style="left:1252.90px;top:750.49px;font-size:11.6px;line-height:11.6px;color:#fff;font-weight:400;font-family:'Liberation Sans',sans-serif;letter-spacing:-0.46px">23.05.2017</div>
<svg class="a" style="left:1325px;top:740px;" width="17" height="16" viewBox="0 0 17 16"><path d="M0.7 0.7H16.3V11.5H10.5L7.7 15.3L7.1 11.5H0.7Z" fill="none" stroke="#fff" stroke-width="1.2"/></svg>
<div class="a" style="left:1361px;top:728px;width:1px;height:40px;background:rgba(255,255,255,.3)"></div>
<svg class="a" style="left:1322px;top:684px;" width="20" height="20" viewBox="0 0 20 20"><path d="M2 18L18 2M12 2H18V8M2 12V18H8" fill="none" stroke="#fff" stroke-width="1.5"/></svg>
<div class="a" style="left:563px;top:664px;width:240px;height:60px;background:rgba(0,0,0,.76)"></div>
<svg class="a" style="left:583px;top:685px;" width="21" height="18" viewBox="0 0 21 18"><path d="M1 9H20M9.5 1L1 9L9.5 17" fill="none" stroke="#777" stroke-width="1.5"/></svg>
<svg class="a" style="left:642px;top:686px;" width="22" height="19" viewBox="0 0 22 19"><path d="M1 1V16H4M6.5 13H21V1H6.5V13" fill="none" stroke="#888" stroke-width="1.3"/><rect x="9.5" y="4.5" width="8" height="3" fill="#888"/><path d="M1 16H7M5 14L7.5 16.5L5 19" fill="none" stroke="#888" stroke-width="1.3"/></svg>
<svg class="a" style="left:704px;top:684px;" width="18" height="21" viewBox="0 0 18 21"><path d="M1 3.5H17M6 3.5V1H12V3.5M3 3.5V19.5H15V3.5" fill="none" stroke="#fff" stroke-width="1.4"/><path d="M6.5 7V16M9 7V16M11.5 7V16" stroke="#fff" stroke-width="1.3"/></svg>
<svg class="a" style="left:762px;top:685px;" width="21" height="18" viewBox="0 0 21 18"><path d="M0 9H19.5M11 1L19.5 9L11 17" fill="none" stroke="#777" stroke-width="1.5"/></svg>
</body></html>
